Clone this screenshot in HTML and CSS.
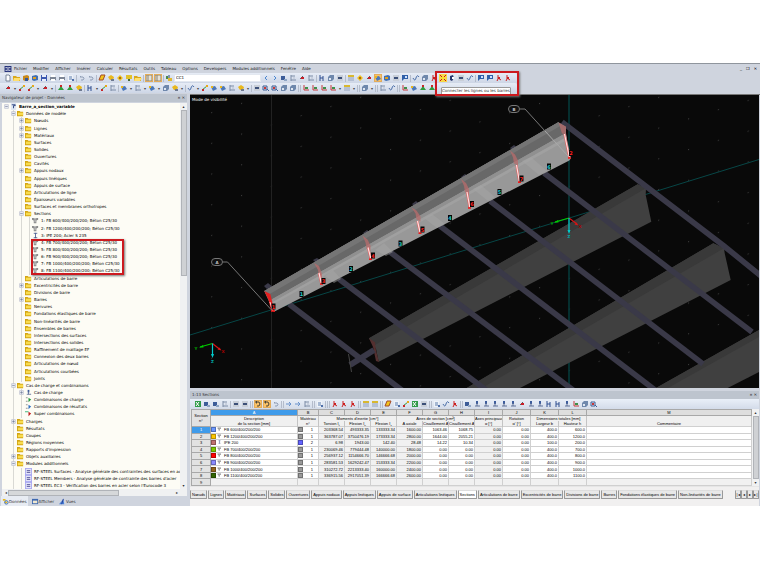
FILE: index.html
```html
<!DOCTYPE html>
<html lang="fr">
<head>
    <meta charset="UTF-8">
    <meta name="viewport" content="width=device-width, initial-scale=1.0">
    <title>Barre_a_section_variable</title>
    <link rel="stylesheet" href="styles.css">
</head>
<body>
<div class="app">
    <header class="top">
        <nav class="menu">
            <svg class="logo" viewBox="0 0 8 7"><rect width="8" height="7" fill="#22307a"/><path d="M1 2h2M5 2h2M1 5h2M5 5h2M4 1v5" stroke="#fff"/></svg>
            <a href="#">Fichier</a><a href="#">Modifier</a><a href="#">Afficher</a><a href="#">Insérer</a>
            <a href="#">Calculer</a><a href="#">Résultats</a><a href="#">Outils</a><a href="#">Tableau</a>
            <a href="#">Options</a><a href="#">Developers</a><a href="#">Modules additionnels</a>
            <a href="#">Fenêtre</a><a href="#">Aide</a>
            <span class="win"><button aria-label="Réduire">_</button><button aria-label="Restaurer">❐</button><button aria-label="Fermer">✕</button></span>
        </nav>
        <div class="bars">
            <div class="bar" id="bar1"></div>
            <div class="bar" id="bar2"></div>
            <div class="mark mark-tools"></div>
            <div class="tooltip">Connecter les lignes ou les barres</div>
        </div>
    </header>

    <main class="work">
        <aside class="navigator">
            <div class="caption"><span>Navigateur de projet - Données</span><span class="pins">¤ ✕</span></div>
            <div class="treebox">
                <ul class="tree" id="tree"><li class="mark mark-tree"></li></ul>
                <div class="vscroll"><i>▴</i><b class="long"></b><i>▾</i></div>
            </div>
            <div class="hscroll"><i>◂</i><b></b><i>▸</i></div>
            <div class="views">
                <button class="active"><svg viewBox="0 0 8 8"><path d="M1 1h3v2H1zM3 4h3v2H3z" fill="#e8b820"/><circle cx="5" cy="5" r="2" fill="none" stroke="#2f68b8"/></svg>Données</button>
                <button><svg viewBox="0 0 8 8"><path d="M0 1h7v6H0z" fill="#3d68b0"/><path d="M1 3h5v3H1z" fill="#f0e8d0"/></svg>Afficher</button>
                <button><svg viewBox="0 0 8 8"><path d="M0 7L5 1l1 6z" fill="#4a80d8"/><path d="M3 7L5 1" stroke="#203c90"/></svg>Vues</button>
            </div>
        </aside>

        <section class="right">
            <svg class="scene" viewBox="190 95 569 293">
                <defs>
                    <pattern id="dots" width="1" height="1" patternUnits="userSpaceOnUse" patternTransform="matrix(29.8 -9.2 0 30.7 211.2 112.2)">
                        <rect width=".035" height=".035" fill="#3c3c3c"/>
                    </pattern>
                </defs>
                <rect x="190" y="95" width="569" height="293" fill="#090909"/>
                <rect x="190" y="95" width="569" height="293" fill="url(#dots)"/>
                <path d="M271.5 95V388" stroke="#222"/>
                <path d="M569 95V388" stroke="#063a3a" stroke-width="1.6"/>
                <path d="M190 335L759 159.500" stroke="#074646" stroke-width="1"/>

                <!-- secondary beams -->
                <g fill="#404040">
                    <path d="M369 338.300L637.700 184.300 646 188.300 645.700 195 651.300 221.700 378.700 361.700 376 349z"/>
                    <path d="M466.700 388L713.300 243.300 724 248.300 724.700 253.300 730.700 280 520 388z"/>
                    <path d="M656 388L759 330V372L727.700 388z"/>
                </g>
                <g fill="#393939">
                    <path d="M369 338.300L637.700 184.300 646 188.300 375 345z"/>
                    <path d="M466.700 388L713.300 243.300 724 248.300 482 388z"/>
                    <path d="M656 388L759 330v7L668 388z"/>
                </g>
                <path d="M369 338.300l6 4 1 8 3 11.700-3-1-3-14z" fill="#543030"/>
                <path d="M350 365L374 350" stroke="#3a3948" stroke-width="6"/>
                <path d="M348.500 354L351.500 372" stroke="#454545"/>

                <!-- purlins -->
                <g fill="none" stroke="#3a3948" stroke-width="5.600">
                    <path d="M562 122L643 184 724 246 761 276"/>
                    <path d="M544 173L752 332"/>
                    <path d="M490 201L703 364"/>
                    <path d="M440 226L655 390"/>
                    <path d="M390 252L573 390"/>
                    <path d="M339 279L486 390"/>
                    <path d="M289 304L403 391"/>
                </g>
                <path d="M264 286l4-3 6 5-5 3zM313 260l4-2 6 4-5 3zM363 233l4-3 5 4-5 3zM412 204l4-3 5 4-5 3zM461 177l4-3 5 4-5 3zM510 148l4-3 5 4-5 3z" fill="#3a3948"/>

                <!-- variable section beam -->
                <path d="M264.300 291L558.300 122.300 566 127.300 565.700 133.300 571 158.300 569.300 160.500 274 311.700 269 301z" fill="#989898"/>
                <path d="M264.300 291L558.300 122.300 566 127.300V133L269 301z" fill="#686868"/>
                <path d="M264.300 291L558.300 122.300 562 125 268 295z" fill="#757575"/>
                <path d="M269 301L566 133 566.500 137 271 303z" fill="#909090"/>
                <path d="M271 303L566.500 137 567 140 272 305z" fill="#a0a0a0"/>
                <g fill="#a6a6a6" opacity=".5">
                    <path d="M325 276l8-6 8 9-7 4zM375 250l9-7 9 9-7 4zM424 218l8-4 13 10-8 4zM473 189l8-4 14 12-7 4zM522 161l9-4 16 14-8 4z"/>
                </g>
                <g fill="#b86c6c" opacity=".75">
                    <path d="M314 263l5 3 3 8 0 6-3-3-1-7z"/>
                    <path d="M362.500 235.500l5 4 3 6v6l-4-3-1-6z"/>
                    <path d="M411.500 207.500l5 3 4 6v5l-4-2-1-6z"/>
                    <path d="M461 179l5 4 3 6v6l-4-3-1-6z"/>
                    <path d="M510 150.500l5 4 3 6v5l-4-2-1-6z"/>
                    <path d="M558.500 122.500l7.500 4v8l-4-1z"/>
                </g>
                <path d="M264.300 291l6 3 1.700 7 2.500 11-3.500-2-2.500-10z" fill="#e22020"/>
                <path d="M270 302L272.500 311" stroke="#ffd0d0"/>
                <g stroke="#e06060" stroke-width="2.200">
                    <path d="M319 273L321.300 284M368 247.500L370.700 259M417.500 221L420 233M467 192L469.700 208M516.500 165L519.300 182M564.500 134L569.300 158"/>
                </g>
                <g stroke="#ffe0e0" stroke-width="1.200">
                    <path d="M319 273L321.300 283M368 247.500L370.700 258M417.500 221L420 232M467 192L469.700 207M516.500 165L519.300 181M564.500 134L569.300 157"/>
                </g>
                <path d="M320 284h3M369 259.300h3M418.500 233.300h3M468 208h3M518 182.300h3M568 158h3M271 311h4" stroke="#f01818" stroke-width="1.500"/>
                <g id="labels"></g>

                <!-- grid line bubbles -->
                <g fill="none" stroke="#777">
                    <rect x="211.500" y="258.500" width="11" height="7" rx="3.500" fill="#111"/>
                    <path d="M223 262H227.500L271 309.500"/>
                    <rect x="508.500" y="105.500" width="11" height="7" rx="3.500" fill="#111"/>
                    <path d="M520 109H525L545 131"/>
                    <path d="M545 131L568 156" stroke="#a8a8a8"/>
                </g>
                <g class="bubble"><text x="217" y="264">A</text><text x="514" y="111">B</text></g>

                <!-- axes -->
                <g stroke-width="1.200" fill="none">
                    <path d="M212.500 343.500L200 347M569 218L555 222" stroke="#0c0"/>
                    <path d="M212.500 343.500L220 349.500M569 218L577 224" stroke="#d81414"/>
                    <path d="M212.500 343.500V356M569 218V232" stroke="#0cc"/>
                </g>
                <path d="M199 347.500l4-2.500.5 2.500zM554 222.500l4-2.500.5 2.500z" fill="#0c0"/>
                <path d="M221.500 350.500l-4-1 2-2zM578.500 225.500l-4-1 2-2z" fill="#d81414"/>
                <path d="M212.500 358l-1.500-4h3zM569 234l-1.500-4h3z" fill="#0cc"/>
                <g class="axis">
                    <text x="196" y="350" fill="#0a0">Y</text><text x="223" y="353" fill="#a00">X</text><text x="212.500" y="363" fill="#0aa">Z</text>
                    <text x="552" y="225" fill="#0a0">Y</text><text x="580" y="228" fill="#a00">X</text><text x="569" y="238" fill="#0aa">Z</text>
                </g>
                <text class="mode" x="192" y="101">Mode de visibilité</text>
            </svg>

            <div class="sheet">
                <div class="caption"><span>1:13 Sections</span><span class="pins">¤ ✕</span></div>
                <div class="bar" id="bar3"></div>
                <div class="gridbox">
                    <table class="grid">
                        <colgroup>
                            <col class="w-no"><col class="w-desc"><col class="w-mat"><col class="w-num"><col class="w-num"><col class="w-num">
                            <col class="w-num"><col class="w-num"><col class="w-num"><col class="w-wide"><col class="w-wide"><col class="w-wide"><col class="w-wide"><col>
                        </colgroup>
                        <thead>
                            <tr class="letters"><th rowspan="3">Section<br>n°</th><th class="sel">A</th><th>B</th><th>C</th><th>D</th><th>E</th><th>F</th><th>G</th><th>H</th><th>I</th><th>J</th><th>K</th><th>L</th><th>M</th></tr>
                            <tr><th>Description</th><th>Matériau</th><th colspan="3">Moments d'inertie [cm⁴]</th><th colspan="3">Aires de section [cm²]</th><th>Axes principaux</th><th>Rotation</th><th colspan="2">Dimensions totales [mm]</th><th></th></tr>
                            <tr><th>de la section [mm]</th><th>n°</th><th>Torsion I<sub>t</sub></th><th>Flexion I<sub>y</sub></th><th>Flexion I<sub>z</sub></th><th>A axiale</th><th>Cisaillement A</th><th>Cisaillement A</th><th>α [°]</th><th>α' [°]</th><th>Largeur b</th><th>Hauteur h</th><th>Commentaire</th></tr>
                        </thead>
                        <tbody id="rows"></tbody>
                    </table>
                    <div class="vscroll"><i>▴</i><b></b><i>▾</i></div>
                </div>
                <div class="tabs" id="tabs"></div>
            </div>
        </section>
    </main>
</div>
<script src="script.js"></script>
</body>
</html>
```
FILE: styles.css
```css
:root {
    --chrome: #cfd4de;
    --caption: #bdc4ce;
    --red: #cc1a1f;
    --ui: "DejaVu Sans", Verdana, sans-serif;
    --cell: "Liberation Sans", Arial, sans-serif;
}

* {
    box-sizing: border-box;
}

body {
    margin: 0;
    padding: 63px 0;
    background: #fff;
    font: 4px/7px var(--ui);
    color: #000;
}

button, select {
    font: inherit;
    color: inherit;
    margin: 0;
    padding: 0;
    border: 0;
    background: none;
}

.app {
    background: var(--chrome);
    border-top: 1px solid #8f959d;
}

/* menu and toolbars */
.menu {
    display: flex;
    align-items: center;
    gap: 6px;
    height: 9px;
    padding-left: 4px;
}

.menu a {
    color: #222;
    text-decoration: none;
}

.logo {
    width: 8px;
    height: 6px;
    margin-right: -4px;
}

.win {
    display: flex;
    gap: 4px;
    margin-left: auto;
    padding-right: 3px;
}

.bars {
    position: relative;
    padding-bottom: 1px;
}

.bar {
    display: flex;
    align-items: center;
    gap: 1px;
    height: 10px;
    padding-left: 4px;
}

.bars .bar {
    width: 68%;
    background: linear-gradient(#e6ecf6, #cdd6e6);
    border-radius: 0 2px 2px 0;
}

.tool {
    flex: none;
    width: 8px;
    height: 8px;
    line-height: 0;
}

.tool svg {
    width: 8px;
    height: 8px;
}

.tool.on {
    background: #fbc267;
    outline: 1px solid #e3ac5a;
    outline-offset: -1px;
}

.drop {
    flex: none;
    width: 4px;
    text-align: center;
    color: #444;
}

.sep {
    flex: none;
    width: 1px;
    height: 7px;
    background: #b4bccb;
}

.case {
    flex: none;
    width: 87px;
    height: 8px;
    padding-left: 1px;
    background: #fff;
    border: 1px solid #e3e8f0;
    appearance: none;
    line-height: 6px;
}

.mark {
    position: absolute;
    border: 2px solid var(--red);
    box-shadow: 1px 1px 2px #777;
    pointer-events: none;
}

.mark-tools {
    left: 435px;
    top: -2px;
    width: 84px;
    height: 25px;
    z-index: 1;
}

.tooltip {
    position: absolute;
    left: 441px;
    top: 14px;
    background: #fff;
    border: 1px solid #999;
    border-radius: 1px;
    line-height: 6px;
    color: #333;
    white-space: nowrap;
}

/* main area */
.work {
    display: grid;
    grid-template-columns: 1fr 3fr;
}

.caption {
    display: flex;
    justify-content: space-between;
    height: 8px;
    padding: 0 2px;
    background: var(--caption);
    color: #333;
    line-height: 8px;
}

.navigator {
    display: flex;
    flex-direction: column;
    padding-right: 3px;
    min-width: 0;
}

.treebox {
    display: flex;
    flex: 1;
    margin: 1px 0 0 2px;
    background: #fdfcf5;
    min-width: 0;
}

.tree {
    position: relative;
    display: grid;
    grid-template-rows: repeat(54, 1fr);
    flex: 1;
    min-width: 0;
    margin: 0;
    padding: 0;
    list-style: none;
    overflow: hidden;
}

.row {
    display: flex;
    align-items: center;
    white-space: nowrap;
    background: linear-gradient(#d9d9d4, #d9d9d4) no-repeat 11px 0 / 1px 100%;
}

.lv0 { background: none; font-weight: bold; }
.lv1 { padding-left: 7px; }
.lv2 { padding-left: 15px; background: linear-gradient(90deg, transparent 11px, #d9d9d4 11px, #d9d9d4 12px, transparent 12px, transparent 19px, #d9d9d4 19px, #d9d9d4 20px, transparent 20px); }
.lv3 { padding-left: 22px; background: linear-gradient(90deg, transparent 11px, #d9d9d4 11px, #d9d9d4 12px, transparent 12px, transparent 19px, #d9d9d4 19px, #d9d9d4 20px, transparent 20px, transparent 27px, #d9d9d4 27px, #d9d9d4 28px, transparent 28px); }

.row svg {
    flex: none;
    width: 7px;
    height: 7px;
    margin-right: 2px;
}

.twist {
    flex: none;
    display: flex;
    align-items: center;
    width: 8px;
    height: 7px;
    padding-left: 2px;
}

.twist svg {
    width: 5px;
    height: 5px;
    margin: 0;
}

.mark-tree {
    grid-row: 20 / 25;
    left: 29px;
    width: 93px;
    height: 100%;
}

.vscroll, .hscroll {
    display: flex;
    align-items: center;
    background: #f0f1f2;
    color: #333;
}

.vscroll {
    flex: none;
    flex-direction: column;
    width: 7px;
}

.vscroll i, .hscroll i {
    font-style: normal;
}

.vscroll b {
    width: 6px;
    flex: 1;
    background: #cfd1d4;
    border: 1px solid #b0b3b8;
}

.vscroll b.long {
    flex: none;
    height: 43%;
}

.vscroll i:last-child {
    margin-top: auto;
}

.hscroll {
    height: 7px;
    margin-left: 2px;
    padding: 0 3px;
}

.hscroll b {
    width: 62%;
    height: 6px;
    margin-left: 1px;
    background: #d6d8da;
    border: 1px solid #b0b3b8;
}

.hscroll i:last-child {
    margin-left: auto;
    padding-right: 6px;
}

.views {
    display: flex;
    gap: 3px;
    height: 10px;
    padding-left: 1px;
}

.views button {
    display: flex;
    align-items: center;
    padding: 0 1px;
    color: #333;
}

.views .active {
    background: #e8ecf3;
}

.views svg {
    width: 7px;
    height: 7px;
}

.right {
    display: flex;
    flex-direction: column;
    min-width: 0;
    padding-right: 1px;
    border-top: 1px solid #777;
}

.scene {
    display: block;
    width: 100%;
}

.scene text {
    font-size: 4px;
}

.scene .nodes text {
    font-size: 5px;
}

.mode {
    fill: #fff;
}

.bubble, .axis, .nodes {
    font-weight: bold;
    text-anchor: middle;
}

.bubble {
    fill: #ccc;
}

/* sections table */
.sheet {
    flex: 1;
    margin-top: 3px;
    padding-bottom: 7px;
    background: #f1f0f0;
}

.sheet .bar {
    background: linear-gradient(#e9eff8, #d3dbe9);
}

.gridbox {
    display: flex;
    background: #e6e6e6;
    height: 78px;
    padding: 0 0 1px 1px;
}

.grid {
    flex: 1;
    table-layout: fixed;
    width: 100%;
    border-collapse: collapse;
    background: #fff;
    font: 4px/5px var(--cell);
}

.grid th, .grid td {
    padding: 0;
    overflow: hidden;
    white-space: nowrap;
    border: 1px solid #d0d0d0;
    font-weight: normal;
    text-align: center;
}

.grid th {
    background: #f0f0f0;
    border-color: #c4c4c4;
}

.grid thead tr + tr th {
    border-top: 0;
    border-bottom: 0;
}

.grid .letters th {
    background: #dedede;
    border-color: #a8a8a8;
}

.grid .letters th:first-child, .grid tbody th {
    background: #e2e2e2;
    border-color: #a8a8a8;
}

.grid .letters .sel, .grid .cur th {
    background: #3f9bea;
    color: #fff;
}

.grid sub {
    font-size: 3px;
    line-height: 0;
}

.grid td {
    padding-right: 1px;
    text-align: right;
}

.grid .calc {
    background: #f1f1f1;
}

.grid td.desc {
    text-align: left;
}

.grid td.desc svg {
    width: 5px;
    height: 4px;
    margin-right: 2px;
}

.mat {
    display: flex;
    justify-content: space-between;
    padding-right: 4px;
}

.sw {
    display: inline-block;
    width: 5px;
    height: 5px;
    margin-right: 1px;
    vertical-align: top;
    border: 1px solid #0004;
}

.w-no { width: 19px; }
.w-desc { width: 87px; }
.w-mat { width: 21px; }
.w-num { width: 26px; }
.w-wide { width: 28px; }

.tabs {
    display: flex;
    gap: 1px;
    margin-top: 3px;
    font: 4px/8px var(--cell);
}

.tabs button {
    flex: none;
    padding: 0 1px;
    background: #e8e8e8;
    border: 1px solid #999;
    border-top-color: #ddd;
    border-radius: 0 0 1px 1px;
    line-height: 7px;
}

.tabs .active {
    background: #fff;
}

.tabs .pager {
    display: flex;
    margin-left: auto;
}

.tabs .pager button {
    width: 6px;
    padding: 0;
}
```
FILE: script.js
```js
// small 8x8 icons, [path, fill] pairs; a third value makes it a stroke
const ICONS = {
    page: [['M2 1h3l1 1v5H2z', '#fff'], ['M2 1h3l1 1v5H2z', '#7a8699', 1]],
    open: [['M0 2h3l1 1h3v4H0z', '#d9a81c'], ['M1 4h7L6 7H0z', '#ffe070']],
    book: [['M1 2l4-1 2 1v4L3 7 1 6z', '#c98a1c'], ['M3 4h3v3H3z', '#34589c']],
    blue: [['M1 2l4-1 2 1v4L3 7 1 6z', '#3f6fb4'], ['M2 3h3v2H2z', '#e0a020']],
    save: [['M1 1h6v6H1z', '#3c58b0'], ['M2 1h4v2H2zM2 5h4v2H2z', '#e8eefa']],
    print: [['M1 3h6v3H1z', '#7d8696'], ['M2 1h4v2H2zM2 5h4v2H2z', '#fff']],
    doc: [['M1 1h5v6H1z', '#eef2f8'], ['M2 3h3M2 5h3', '#5f7fae', 1], ['M5 5h2v2H5z', '#4d6ea8']],
    undo: [['M2 3h3q2 1 0 3H3M2 3l1-1', '#8f9db5', 1]],
    para: [['M3 1h4L5 6H1z', '#f2c31b'], ['M3 1h4L5 6H1z', '#a34a2a', 1]],
    bulb: [['M4 1l3 2-1 3H3L1 3z', '#e8b81e'], ['M4 5h3v2H4z', '#6c7890']],
    ring: [['M4 1l3 3-3 3-3-3z', '#f0c21e'], ['M3 3h2v2H3z', '#a86a18']],
    mon: [['M1 1h6v4H1z', '#e2c22c'], ['M3 5h2v2H3z', '#466a3a']],
    layout: [['M1 1h6v6H1z', '#e6e2d8'], ['M1 1h6v6H1zM3 1v6', '#8c8470', 1]],
    turn: [['M2 2h3q2 2 0 4H3', '#4a4438', 1], ['M1 2l2-2v4z', '#4a4438']],
    load: [['M1 2h2v3H1z', '#4a8a4a'], ['M3 4h4v3H3z', '#e0b830'], ['M4 1v3', '#24427c', 1]],
    prev: [['M5 2L3 4l2 2', '#4a86d0', 1]],
    next: [['M3 2l2 2-2 2', '#4a86d0', 1]],
    view: [['M1 2h4v4H1z', '#3c5c98'], ['M4 5h3v2H4z', '#8fa5c4']],
    frame: [['M2 1v6M2 2h4M2 6h5', '#7d8ca6', 1], ['M4 3h2v2H4z', '#c8d0de']],
    node: [['M2 5l3-3', '#566', 1], ['M3 3h3v2H3z', '#c8202a']],
    line: [['M1 6l5-4', '#3a9a3a', 1], ['M5 1h2v2H5z', '#e8a818'], ['M1 5h2v2H1z', '#c82828']],
    surf: [['M1 3l4-1 2 3-4 2z', '#4c78b8'], ['M1 2h2v2H1z', '#e8b820']],
    sup: [['M4 2l3 4H1z', '#2f9c3c'], ['M3 1h2v2H3z', '#c82828']],
    glass: [['M1 2h4v4H1z', '#d8e2f0'], ['M1 2h4v4H1zM5 5l2 2', '#3f5e94', 1], ['M2 3h2v2H2z', '#c83838']],
    axis: [['M2 1v5h5', '#c83c3c', 1], ['M3 3h3v2H3z', '#3f8f4a']],
    cube: [['M1 3l2-2h4v4L5 7H1z', '#6f88ac'], ['M2 4h2v2H2z', '#dfe7f2']],
    arrow: [['M1 4h5M4 2l2 2-2 2', '#6a93cc', 1]],
    text: [['M2 1v6M2 4h3M5 2v5', '#2f4f90', 1]],
    pin: [['M3 1h2v3H3z', '#3c5c9c'], ['M2 6h5M4 3v3', '#5f7098', 1]],
    redt: [['M3 1v4l-1 2M3 4l3 2', '#cc2020', 1], ['M3 3h2v2H3z', '#cc2020']],
    join: [['M0 0h8v8H0z', '#f8d848'], ['M1 1l6 6M7 1L1 7', '#c81818', 1], ['M3 3h2v2H3z', '#f8e020']],
    moon: [['M2 2l3-1 1 3-2 3-2-1z', '#26366c'], ['M4 3h2v2H4z', '#fff']],
    gear: [['M1 1h6v6H1z', '#c9cfd8'], ['M2 3h4v2H2z', '#3c5078']],
    curve: [['M1 4q2 4 3 0t3-1', '#4a6ea8', 1]],
    flag: [['M1 1h6v4H3L1 7z', '#2f5fa8'], ['M4 2h2v2H4z', '#cfe2ff']],
    sheet: [['M1 1h6v6H1z', '#fff'], ['M1 1h6v2H1z', '#d8b830'], ['M1 4h6M1 6h6', '#6a80a8', 1]],
    xls: [['M1 1h6v6H1z', '#2f9a48'], ['M2 2l3 4M5 2L2 6', '#fff', 1]],
    folder: [['M0 1h3l1 1h3v5H0z', '#d3a512'], ['M1 3h6v3H1z', '#f8dc50']],
    sect: [['M0 1h7v2L5 4v3H2V4L0 3z', '#8a8a8a'], ['M2 2h3M3.500 3v3', '#d8d8d8', 1]],
    ibeam: [['M2 1.500h4M4 1v6M2 6.500h4', '#4b5f94', 1]],
    comb: [['M1 2h2M1 6h2', '#888', 1], ['M4 2l3 2-3 3z', '#229a3c']],
    combr: [['M1 2h2M1 6h2', '#888', 1], ['M4 2l3 2-3 3z', '#2f6fc0']],
    combs: [['M0 2h4', '#30b070', 1], ['M4 2l3 2-3 3z', '#c01c1c']],
    module: [['M0 0h8v8H0z', '#a9a9f0'], ['M1 1h6v6H1z', '#e4e4fa'], ['M2 3h4M2 5h4', '#4a4a90', 1]],
    project: [['M1 0h6v8H1z', '#dfe6f2'], ['M2 2h4v1H4v3', '#243c7c', 1]],
    plus: [['M1 1h6v6H1z', '#eceef6'], ['M1 1h6v6H1z', '#b4b9c8', 1], ['M4 2v4M2 4h4', '#6a7690', 1]],
    minus: [['M1 1h6v6H1z', '#eceef6'], ['M1 1h6v6H1z', '#b4b9c8', 1], ['M2 4h4', '#6a7690', 1]]
};

function icon(name) {
    const parts = ICONS[name].map(([d, c, s]) =>
        s ? `<path d="${d}" fill="none" stroke="${c}"/>` : `<path d="${d}" fill="${c}"/>`);
    return `<svg viewBox="0 0 8 8">${parts.join('')}</svg>`;
}

// "|" separator, "v" drop-down arrow, "*" pressed button
function fillBar(id, spec) {
    document.getElementById(id).innerHTML = spec.split(' ').map(t => {
        if (t === '|') return '<span class="sep"></span>';
        if (t === 'v') return '<span class="drop">▾</span>';
        if (t === 'case') return '<select class="case" aria-label="Cas de charge"><option>CC1</option></select>';
        const on = t[0] === '*';
        const name = on ? t.slice(1) : t;
        return `<button class="tool${on ? ' on' : ''}" aria-label="${name}">${icon(name)}</button>`;
    }).join('');
}

fillBar('bar1', 'page open book blue save print print doc | undo undo | para bulb ring mon open | *layout *layout | load case prev next view frame node frame | text cube gear | sheet ring node *surf blue gear flag | curve cube redt join moon gear curve | flag flag redt redt');
fillBar('bar2', 'node v line line v node v | sup sup bulb | text v line frame | surf v frame v surf v cube bulb v | curve v line surf surf frame bulb v | gear glass glass cube cube | | axis axis axis axis v sheet v | | cube v | | frame curve | | axis surf sup sup');
fillBar('bar3', 'xls view view frame | gear gear | | *turn *turn undo | | arrow arrow frame | | doc | | | redt redt redt | | sheet sheet | | para doc line xls gear | | doc curve redt | | view pin pin pin pin pin node pin pin text text pin axis cube glass');

const TREE = `0-project Barre_a_section_variable
1-folder Données de modèle
2+folder Nœuds
2+folder Lignes
2+folder Matériaux
2.folder Surfaces
2.folder Solides
2.folder Ouvertures
2.folder Cavités
2+folder Appuis nodaux
2.folder Appuis linéiques
2.folder Appuis de surface
2.folder Articulations de ligne
2.folder Épaisseurs variables
2.folder Surfaces et membranes orthotropes
2-folder Sections
3.sect 1: FB 600/400/200/200; Béton C25/30
3.sect 2: FB 1200/400/200/200; Béton C25/30
3.ibeam 3: IPE 200; Acier S 235
3.sect 4: FB 700/400/200/200; Béton C25/30
3.sect 5: FB 800/400/200/200; Béton C25/30
3.sect 6: FB 900/400/200/200; Béton C25/30
3.sect 7: FB 1000/400/200/200; Béton C25/30
3.sect 8: FB 1100/400/200/200; Béton C25/30
2.folder Articulations de barre
2+folder Excentricités de barre
2.folder Divisions de barre
2+folder Barres
2.folder Nervures
2.folder Fondations élastiques de barre
2.folder Non-linéarités de barre
2.folder Ensembles de barres
2.folder Intersections des surfaces
2.folder Intersections des solides
2.folder Raffinement de maillage EF
2.folder Connexion des deux barres
2.folder Articulations de nœud
2.folder Articulations courbées
2.folder Joints
1-folder Cas de charge et combinaisons
2+pin Cas de charge
2.comb Combinaisons de charge
2.combr Combinaisons de résultats
2.combs Super combinaisons
1+folder Charges
1.folder Résultats
1.folder Coupes
1.folder Régions moyennes
1.folder Rapports d'impression
1+folder Objets auxiliaires
1-folder Modules additionnels
2.module RF-STEEL Surfaces - Analyse générale des contraintes des surfaces en acier
2.module RF-STEEL Members - Analyse générale de contrainte des barres d'acier
2.module RF-STEEL EC3 - Vérification des barres en acier selon l'Eurocode 3`;

document.getElementById('tree').insertAdjacentHTML('afterbegin', TREE.split('\n').map(line => {
    const [, lv, sign, name, text] = line.match(/^(\d)(.)(\w+) (.*)$/);
    const box = sign === '.' ? '' : icon(sign === '+' ? 'plus' : 'minus');
    return `<li class="row lv${lv}"><span class="twist">${box}</span>${icon(name)}<span>${text}</span></li>`;
}).join(''));

const ROWS = [
    ['#6b97ff', 'FB 600/400/200/200', 1, '203368.54', '493333.35', '133333.34', '1600.00', '1063.46', '1068.75', '0.00', '0.00', '400.0', '600.0'],
    ['#ffc800', 'FB 1200/400/200/200', 1, '363787.07', '3750476.19', '173333.34', '2800.00', '1644.00', '2055.21', '0.00', '0.00', '400.0', '1200.0'],
    ['#c07070', 'IPE 200', 2, '6.98', '1943.00', '142.40', '28.48', '14.22', '10.34', '0.00', '0.00', '100.0', '200.0'],
    ['#7cc800', 'FB 700/400/200/200', 1, '230069.46', '779444.48', '140000.00', '1800.00', '0.00', '0.00', '0.00', '0.00', '400.0', '700.0'],
    ['#ff0000', 'FB 800/400/200/200', 1, '256937.12', '1154666.70', '146666.68', '2000.00', '0.00', '0.00', '0.00', '0.00', '400.0', '800.0'],
    ['#8a8aff', 'FB 900/400/200/200', 1, '283581.53', '1629242.47', '153333.34', '2200.00', '0.00', '0.00', '0.00', '0.00', '400.0', '900.0'],
    ['#94641e', 'FB 1000/400/200/200', 1, '310272.72', '2213333.40', '160000.00', '2400.00', '0.00', '0.00', '0.00', '0.00', '400.0', '1000.0'],
    ['#326400', 'FB 1100/400/200/200', 1, '336915.56', '2917051.39', '166666.68', '2600.00', '0.00', '0.00', '0.00', '0.00', '400.0', '1100.0']
];
const CALC = [3, 4, 5, 6, 9];

document.getElementById('rows').innerHTML = ROWS.map((r, i) => {
    const nums = r.slice(3).map((v, k) => `<td${CALC.includes(k + 3) ? ' class="calc"' : ''}>${v}</td>`).join('');
    return `<tr${i ? '' : ' class="cur"'}><th>${i + 1}</th>` +
        `<td class="desc"><span class="sw" style="background:${r[0]}"></span>${icon(i === 2 ? 'ibeam' : 'sect')}${r[1]}</td>` +
        `<td><span class="mat"><span class="sw" style="background:${r[2] === 2 ? '#6464ff' : '#999'}"></span>${r[2]}</span></td>${nums}<td></td></tr>`;
}).join('') + '<tr><th>9</th>' + '<td class="calc"></td>'.repeat(13) + '</tr>';

const TABS = ['Nœuds', 'Lignes', 'Matériaux', 'Surfaces', 'Solides', 'Ouvertures', 'Appuis nodaux', 'Appuis linéiques', 'Appuis de surface',
    'Articulations linéiques', 'Sections', 'Articulations de barre', 'Excentricités de barre', 'Divisions de barre', 'Barres',
    'Fondations élastiques de barre', 'Non-linéarités de barre'];
document.getElementById('tabs').innerHTML =
    TABS.map(t => `<button${t === 'Sections' ? ' class="active"' : ''}>${t}</button>`).join('') +
    '<span class="pager"><button>|◂</button><button>◂</button><button>▸</button><button>▸|</button></span>';

// node numbers in red, member numbers in cyan
const LABELS = [
    [273.5, 306.5, 1, 'r'], [323.5, 281, 3, 'r'], [373, 255.5, 4, 'r'], [422.5, 229.5, 5, 'r'], [472, 204, 6, 'r'], [521.5, 178.5, 7, 'r'], [571, 153, 2, 'r'],
    [301.5, 294, 1], [351, 269, 2], [400.5, 243.5, 3], [450, 218, 4], [499.5, 192, 5], [549, 166.5, 6]
];
document.getElementById('labels').innerHTML = '<g class="nodes">' + LABELS.map(([x, y, n, c]) =>
    `<rect x="${x - 2}" y="${y - 3}" width="4" height="6" fill="#050505"/><text x="${x}" y="${y + 2}" fill="${c ? '#ff2020' : '#20c8c8'}">${n}</text>`).join('') + '</g>';
```
